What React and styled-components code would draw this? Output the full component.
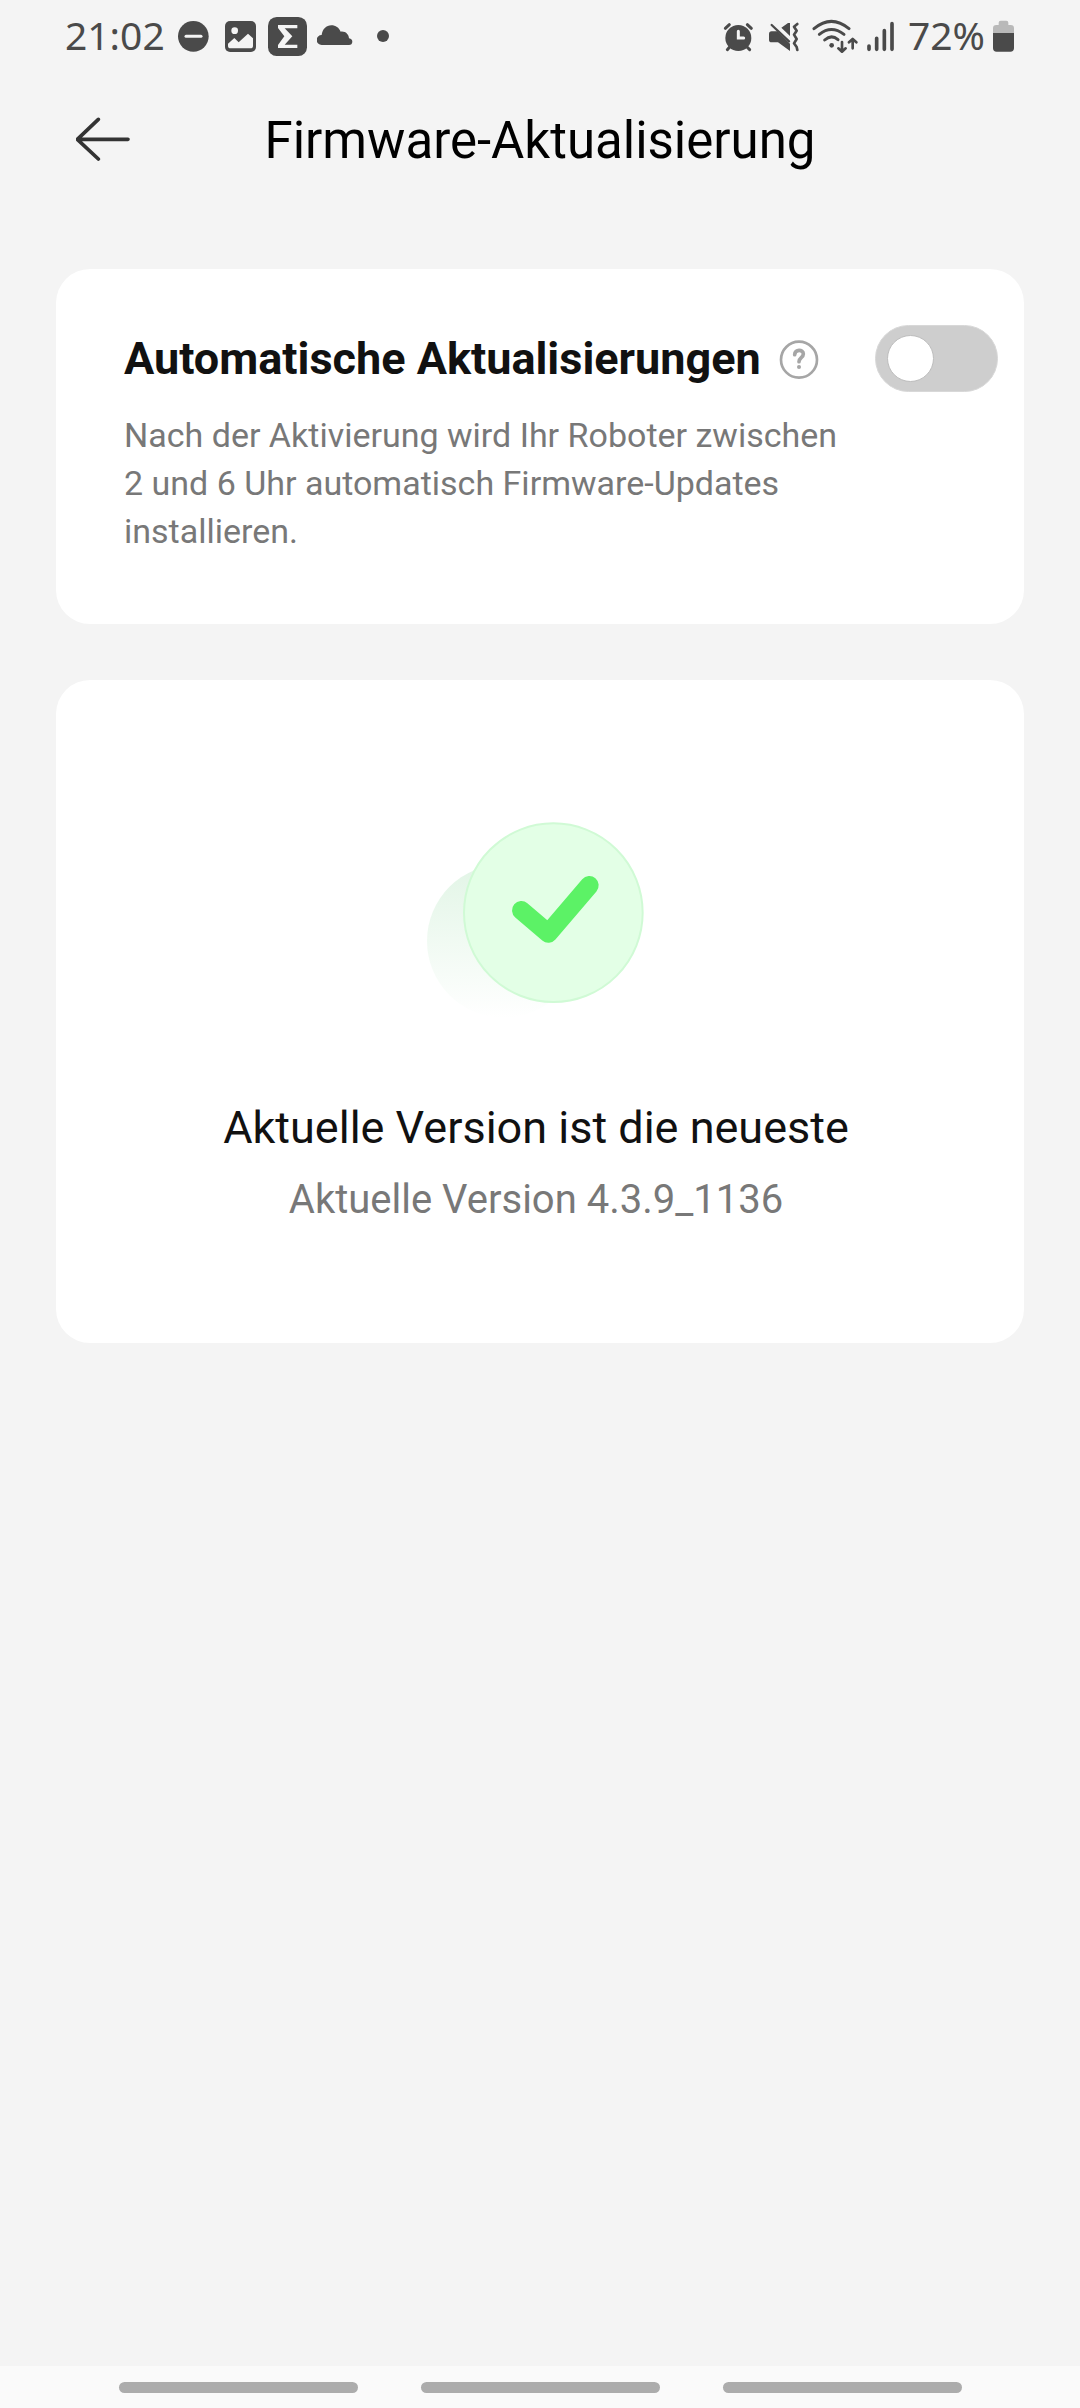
import React, { useState } from 'react'
import styled, { createGlobalStyle } from 'styled-components'

const theme = {
  bg: { page: '#f4f4f4', card: '#ffffff', nav: '#fafafa' },
  color: {
    title: '#000000',
    default: '#111111',
    muted: '#787878',
    system: '#4a4a4a',
    handle: '#acacac',
  },
}

function App() {
  const [autoUpdate, setAutoUpdate] = useState(false)

  return (
    <Screen>
      <GlobalStyle />
      <StatusBar />
      <Header>
        <BackButton type="button" aria-label="Zurück">
          <BackArrow />
        </BackButton>
        <Title>Firmware-Aktualisierung</Title>
      </Header>

      <Content>
        <SettingCard>
          <SettingRow>
            <SettingLabel htmlFor="auto-update">
              Automatische Aktualisierungen
            </SettingLabel>
            <HelpButton type="button" aria-label="Hilfe">
              <HelpIcon />
            </HelpButton>
            <Switch
              id="auto-update"
              type="checkbox"
              role="switch"
              checked={autoUpdate}
              onChange={(e) => setAutoUpdate(e.target.checked)}
            />
          </SettingRow>
          <Description>
            Nach der Aktivierung wird Ihr Roboter zwischen 2 und 6 Uhr
            automatisch Firmware-Updates installieren.
          </Description>
        </SettingCard>

        <VersionCard>
          <UpToDate />
          <VersionStatus>Aktuelle Version ist die neueste</VersionStatus>
          <VersionNumber>Aktuelle Version 4.3.9_1136</VersionNumber>
        </VersionCard>
      </Content>

      <NavBar aria-label="Systemnavigation">
        <NavButton type="button" aria-label="Letzte Apps" />
        <NavButton type="button" aria-label="Startbildschirm" />
        <NavButton type="button" aria-label="Zurück" />
      </NavBar>
    </Screen>
  )
}

function StatusBar() {
  return (
    <StatusRow>
      <StatusGroup $gap={10}>
        <StatusText>21:02</StatusText>
        <svg width="37" height="40" viewBox="408 48 111 120">
          <circle cx="463" cy="109" r="46" fill={theme.color.system} />
          <path d="M441 109H486" stroke={theme.bg.page} strokeWidth="9" strokeLinecap="round" />
        </svg>
        <svg width="36" height="40" viewBox="549 48 108 120">
          <rect x="558" y="63" width="93" height="93" rx="15" fill={theme.color.system} />
          <circle cx="587" cy="92" r="10" fill={theme.bg.page} />
          <path
            d="M567 131L586 114L599 127L627 101L642 115V137Q642 145 634 145H575Q567 145 567 137Z"
            fill={theme.bg.page}
          />
        </svg>
        <svg width="39" height="40" viewBox="687 48 117 120">
          <rect x="687" y="51" width="117" height="117" rx="26" fill={theme.color.system} />
          <path
            d="M717 75H775V85H737L760 109L737 134H775V144H717V135L736 109L717 84Z"
            fill={theme.bg.page}
          />
        </svg>
        <svg width="36" height="40" viewBox="834 48 108 120">
          <path
            d="M848 135A15 15 0 0 1 848 105C850 88 862 76 877 76C890 76 900 83 905 95C919 93 929 102 930 115C937 116 940 121 940 125C940 131 936 135 930 135Z"
            fill={theme.color.system}
          />
        </svg>
        <svg width="40" height="40" viewBox="972 48 120 120">
          <circle cx="1032" cy="108" r="18" fill={theme.color.system} />
        </svg>
      </StatusGroup>

      <StatusGroup $gap={8}>
        <svg width="37" height="40" viewBox="66 48 111 120">
          <g fill="none" stroke={theme.color.system} strokeLinecap="round">
            <path d="M73 85L85 74M151 85L139 74" strokeWidth="9" />
            <path d="M86 141L79 149M138 141L146 149" strokeWidth="9" />
          </g>
          <circle cx="112" cy="114" r="39" fill={theme.color.system} />
          <path d="M112 94V114H128" fill="none" stroke={theme.bg.page} strokeWidth="9" strokeLinecap="round" />
        </svg>
        <svg width="36" height="40" viewBox="201 48 108 120">
          <path
            d="M212 94H229L267 131V153L231 127H212Q204 127 204 119V102Q204 94 212 94ZM267 69V108L241 83L261 69Z"
            fill={theme.color.system}
          />
          <path d="M212 75L264 124" stroke={theme.color.system} strokeWidth="7" strokeLinecap="round" />
          <path
            d="M289 72L279 80L287 92L279 104L287 117L279 130L287 141L289 150"
            fill="none"
            stroke={theme.color.system}
            strokeWidth="8"
            strokeLinecap="round"
            strokeLinejoin="round"
          />
        </svg>
        <svg width="46" height="40" viewBox="333 48 138 120">
          <g fill="none" stroke={theme.color.system} strokeWidth="9" strokeLinecap="round" strokeLinejoin="round">
            <path d="M339 86Q391 42 444 86" />
            <path d="M355 103Q391 74 429 103" />
            <path d="M371 120Q391 102 411 119" />
            <path d="M423 126V154M412 145L423 155L434 145" strokeWidth="8" />
            <path d="M455 145V118M444 127L455 117L466 127" strokeWidth="8" />
          </g>
          <circle cx="392" cy="136" r="7" fill={theme.color.system} />
        </svg>
        <svg width="34" height="40" viewBox="495 48 102 120">
          <path
            d="M504 138V148M527 115V148M550 92V148M573 71V148"
            stroke={theme.color.system}
            strokeWidth="11"
            strokeLinecap="round"
          />
        </svg>
        <StatusText>72%</StatusText>
        <svg width="22" height="40" viewBox="885 48 66 120">
          <path
            d="M885 100V85Q885 75 895 75H902V68Q902 62 908 62H925Q931 62 931 68V75H938Q948 75 948 85V100Z"
            fill="#b9b9b9"
          />
          <path d="M885 99H948V144Q948 155 937 155H896Q885 155 885 144Z" fill={theme.color.system} />
        </svg>
      </StatusGroup>
    </StatusRow>
  )
}

function BackArrow() {
  return (
    <svg width="56" height="48" viewBox="108 79 168 144">
      <path
        d="M264 146H112M175 86L112 146L175 205"
        fill="none"
        stroke="#333333"
        strokeWidth="11"
        strokeLinecap="round"
        strokeLinejoin="round"
      />
    </svg>
  )
}

function HelpIcon() {
  return (
    <svg width="40" height="40" viewBox="659 266 120 120">
      <circle cx="719" cy="328" r="54" fill="none" stroke="#a6a6a6" strokeWidth="8" />
      <path
        d="M706 313C706 296 732 296 732 311C732 322 719 322 719 334"
        fill="none"
        stroke="#a6a6a6"
        strokeWidth="11"
        strokeLinecap="round"
      />
      <circle cx="719" cy="350" r="6" fill="#a6a6a6" />
    </svg>
  )
}

function UpToDate() {
  return (
    <svg width="218" height="200" viewBox="81 90 654 600">
      <defs>
        <linearGradient id="shade" x1="0" y1="0" x2="0" y2="1">
          <stop offset="0" stopColor="#e2f5e6" />
          <stop offset="1" stopColor="#ffffff" />
        </linearGradient>
      </defs>
      <circle cx="311" cy="453" r="230" fill="url(#shade)" />
      <circle cx="460" cy="368" r="268" fill="#e3ffe6" stroke="#d0fad5" strokeWidth="6" />
      <path
        d="M364 361L445 430L568 286"
        fill="none"
        stroke="#5cf266"
        strokeWidth="56"
        strokeLinecap="round"
        strokeLinejoin="round"
      />
    </svg>
  )
}

const GlobalStyle = createGlobalStyle`
  * {
    box-sizing: border-box;
  }

  body {
    margin: 0;
    font-family: Roboto, sans-serif;
    background-color: ${theme.bg.page};
  }

  button {
    padding: 0;
    border: none;
    background: none;
    cursor: pointer;
  }

  svg {
    display: block;
    flex-shrink: 0;
  }
`

const Screen = styled.div`
  display: flex;
  flex-direction: column;
  min-height: 100vh;
  background-color: ${theme.bg.page};
`

const StatusRow = styled.div`
  display: flex;
  justify-content: space-between;
  align-items: center;
  height: 72px;
  padding: 0 65px;
`

const StatusGroup = styled.div`
  display: flex;
  align-items: center;
  gap: ${(props) => props.$gap}px;
`

const StatusText = styled.span`
  padding-bottom: 2px;
  color: ${theme.color.system};
  font-family: 'Noto Sans', sans-serif;
  font-size: 39px;
  line-height: 40px;
`

const Header = styled.header`
  display: grid;
  grid-template-columns: 1fr auto 1fr;
  align-items: center;
  height: 137px;
  padding: 0 76px;
`

const BackButton = styled.button`
  justify-self: start;
`

const Title = styled.h1`
  margin: 0;
  color: ${theme.color.title};
  font-size: 51px;
  font-weight: 400;
  line-height: 60px;
`

const Content = styled.main`
  display: flex;
  flex: 1;
  flex-direction: column;
  gap: 56px;
  padding: 60px 56px;
`

const Card = styled.section`
  border-radius: 34px;
  background-color: ${theme.bg.card};
`

const SettingCard = styled(Card)`
  padding: 56px 26px 69px 68px;
`

const SettingRow = styled.div`
  display: flex;
  align-items: center;
  gap: 18px;
`

const SettingLabel = styled.label`
  color: ${theme.color.default};
  font-size: 45px;
  font-weight: 700;
  line-height: 56px;
`

const HelpButton = styled.button`
  border-radius: 50%;
`

const Switch = styled.input`
  display: flex;
  align-items: center;
  appearance: none;
  width: 123px;
  height: 67px;
  margin: 0 0 0 auto;
  padding: 0 11px;
  border: 1px solid #d8d8d8;
  border-radius: 34px;
  background-color: #cecece;
  cursor: pointer;

  &::before {
    content: '';
    width: 45px;
    height: 45px;
    border: 1px solid #bdbdbd;
    border-radius: 50%;
    background-color: #ffffff;
  }

  &:checked {
    justify-content: flex-end;
    background-color: #5cf266;
  }
`

const Description = styled.p`
  max-width: 724px;
  margin: 19px 0 0;
  color: ${theme.color.muted};
  font-size: 34px;
  line-height: 48px;
`

const VersionCard = styled(Card)`
  display: flex;
  flex-direction: column;
  align-items: center;
  padding: 140px 64px 115px 56px;
`

const VersionStatus = styled.h2`
  margin: 80px 0 16px;
  color: ${theme.color.default};
  font-size: 45px;
  font-weight: 400;
  line-height: 56px;
`

const VersionNumber = styled.p`
  margin: 0;
  color: ${theme.color.muted};
  font-size: 40px;
  line-height: 56px;
`

const NavBar = styled.nav`
  display: flex;
  justify-content: center;
  align-items: center;
  gap: 63px;
  height: 42px;
  background-color: ${theme.bg.nav};
`

const NavButton = styled.button`
  width: 239px;
  height: 11px;
  border-radius: 6px;
  background-color: ${theme.color.handle};
`

export default App
